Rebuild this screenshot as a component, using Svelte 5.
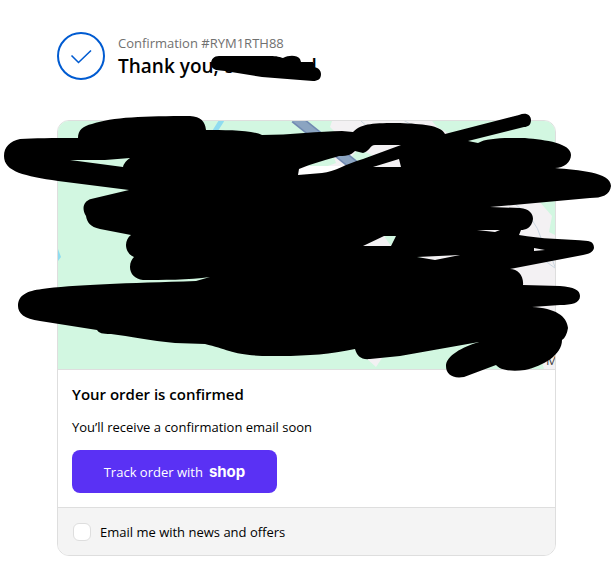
<script>
    let confirmation = 'RYM1RTH88';

    // Marketing opt-in
    let newsletter = false;
</script>

<main>
    <header>
        <svg class="check" viewBox="0 0 48 48" aria-hidden="true">
            <circle cx="24" cy="24" r="23" />
            <path d="M14.5 23.5l7 7 12.500-12" />
        </svg>
        <div class="heading">
            <p class="number">Confirmation #{confirmation}</p>
            <h1>
                Thank you,
                <span class="name">
                    <span>s</span><span>d</span>
                    <svg viewBox="0 0 112 28" aria-hidden="true">
                        <path d="M1 10C1 5 4 2 9 2L60 2C67 2 70 3 73 4C79 1 87 1 90 5L91 8L103 8L104 13C109 14 111 17 111 20C111 25 108 27 103 27L90 26L52 23L15 17L6 16C3 15 1 13 1 10Z" />
                    </svg>
                </span>
            </h1>
        </div>
    </header>

    <section class="card">
        <div class="map">
            <svg class="tiles" viewBox="58 121 497 248" preserveAspectRatio="xMidYMid slice" aria-hidden="true">
                <rect x="58" y="121" width="497" height="248" fill="#d2f7e1" />
                <path d="M332 121L330 127L340 137L330 146L336 163L290 180L340 250L420 257L530 320L544 369H555V235L549 232L552 216L538 200L480 150L437 127L432 121ZM366 358L376 367L382 358Z" fill="#f3f1f3" />
                <path d="M349 160L358 149L372 155L362 164ZM384 236H396L391 246Z" fill="#d2f7e1" />
                <rect x="280" y="166" width="80" height="14" fill="#fff" />
                <path d="M222 120L215 131" stroke="#8fdcf0" stroke-width="5" />
                <path d="M58 249L61 257L58 261Z" fill="#8fdcf0" />
                <path d="M295 118L355 166" stroke="#7189b2" stroke-width="11" />
                <path d="M295 118L355 166" stroke="#8ba4c1" stroke-width="8" />
                <path d="M361 121L370 129M403 120L412 125M515 204Q536 219 541 238M541 258L555 268M551 256L555 267" fill="none" stroke="#c9d6e0" stroke-width="1" />
                <text x="546" y="365">M</text>
            </svg>
            <svg class="marks" viewBox="58 121 497 248" aria-hidden="true">
                <path fill-rule="evenodd" d="M4 156C4 147 10 141 20 139C34 138 52 138 78 138C78 130 83 126 92 124C112 117 145 116 190 116C201 117 205 121 206 130C225 130 252 130 262 135C290 135 320 131 342 131L353 132C362 123 374 123 400 123C421 124 441 125 445 134L519 115C526 112 531 115 531 120C531 125 528 127 524 127L468 141L478 143C487 138 503 138 525 138C546 140 571 143 571 155C571 162 564 168 555 168C578 170 611 172 611 186C610 195 602 198 590 198L490 207L520 208C529 209 533 213 533 219C532 228 525 230 521 230L519 235C540 239 566 239 588 241C593 242 594 245 594 248C593 252 589 254 583 255L510 269C518 269 524 276 523 285L560 286C574 287 580 290 580 296C580 303 572 305 560 305L532 307C555 308 567 316 568 328C567 334 565 338 562 340C562 355 543 366 525 370C511 372 500 370 496 365L464 377C452 379 446 374 446 366C446 356 462 347 479 342L400 356L370 359C361 360 357 356 355 349C330 354 310 356 280 356C235 357 231 350 205 344L175 343C150 341 130 336 111 334C102 334 99 333 97 330L40 321C24 319 18 313 18 306C18 295 27 291 42 289C70 285 130 283 196 281L210 277C190 280 160 280 143 280C135 279 130 274 130 267C130 262 132 259 134 257C129 255 126 250 126 245C126 241 128 237 131 235L100 229C90 227 87 222 86 216C81 208 84 201 91 199L129 190L58 181C25 176 4 172 4 156Z
                    M70 160L105 160L130 158Q124 162 123 167Z
                    M298 175L299 169C310 164 330 159 339 156C349 156 352 154 355 151L363 153C369 152 370 145 375 145L401 145L363 159C345 164 335 172 322 173Z
                    M373 167L399 159L401 167Z
                    M363 246L384 236H396L391 246Z
                    M477 230H500L495 232Z
                    M534 248L545 250L534 251Z
                    M417 257L460 255L435 260Z" />
            </svg>
        </div>

        <div class="status">
            <h2>Your order is confirmed</h2>
            <p>You’ll receive a confirmation email soon</p>
            <button type="button">Track order with <span class="shop">shop</span></button>
        </div>

        <div class="offers">
            <label>
                <input type="checkbox" bind:checked={newsletter} />
                Email me with news and offers
            </label>
        </div>
    </section>
</main>

<style>
    :global(body) {
        background: #fff;
    }

    main {
        padding: 32px 57px 6px;
        font-family: 'Open Sans', 'Noto Sans', sans-serif;
        font-size: 13px;
        line-height: 20px;
        color: #000;
    }

    header {
        display: flex;
        align-items: center;
        gap: 13px;
        margin-bottom: 40px;
    }

    h1, h2, p {
        margin: 0;
    }

    .check {
        width: 48px;
        height: 48px;
        fill: none;
        stroke: #005bd1;
        stroke-width: 2;
    }

    .check path {
        stroke-width: 1.6;
    }

    .number {
        color: #707070;
    }

    h1 {
        display: flex;
        gap: 6px;
        font-size: 19px;
        font-weight: 600;
        line-height: 26px;
    }

    .name {
        position: relative;
        display: flex;
        justify-content: space-between;
        width: 92px;
    }

    .name svg {
        position: absolute;
        left: -15px;
        top: 1px;
        width: 112px;
        height: 28px;
    }

    .card {
        border: 1px solid #dedede;
        border-radius: 12px;
    }

    .map {
        position: relative;
        aspect-ratio: 497 / 248;
        border-bottom: 1px solid #dedede;
    }

    .tiles {
        display: block;
        width: 100%;
        height: 100%;
        border-radius: 11px 11px 0 0;
    }

    .tiles text {
        font-size: 13px;
        fill: #444;
    }

    .marks {
        position: absolute;
        inset: 0;
        width: 100%;
        height: 100%;
        overflow: visible;
        pointer-events: none;
    }

    .status {
        padding: 14px;
    }

    h2 {
        font-size: 15px;
        font-weight: 600;
    }

    .status p {
        margin: 13px 0;
    }

    button {
        display: flex;
        align-items: center;
        justify-content: center;
        gap: 6px;
        min-width: 205px;
        height: 43px;
        border: none;
        border-radius: 8px;
        background: #5a31f4;
        color: #fff;
        font: inherit;
        cursor: pointer;
    }

    .shop {
        font-family: Inter, sans-serif;
        font-size: 15px;
        font-weight: 700;
    }

    .offers {
        padding: 13px 14px;
        border-top: 1px solid #dedede;
        border-radius: 0 0 11px 11px;
        background: #f4f4f4;
    }

    label {
        display: flex;
        align-items: center;
        gap: 8px;
        min-height: 21px;
    }

    input {
        appearance: none;
        box-sizing: border-box;
        width: 18px;
        height: 18px;
        margin: 0 1px;
        border: 1px solid #dedede;
        border-radius: 6px;
        background: #fff;
    }

    input:checked {
        border-color: #005bd1;
        background: #005bd1;
    }
</style>
